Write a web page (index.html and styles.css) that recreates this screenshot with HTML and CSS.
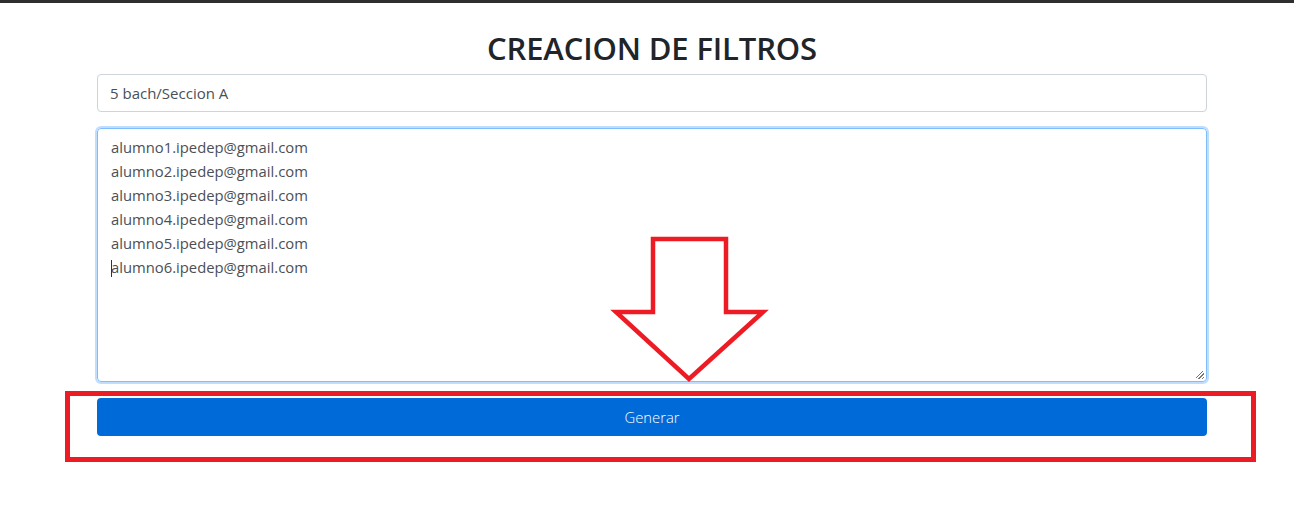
FILE: index.html
```html
<!DOCTYPE html>
<html lang="es">
<head>
<meta charset="utf-8">
<title>Creacion de filtros</title>
<link rel="stylesheet" href="styles.css">
</head>
<body>
<div class="topbar"></div>
<main class="container">
  <h2 class="title">CREACION DE FILTROS</h2>
  <form class="form">
    <input class="field" type="text" value="5 bach/Seccion A">
    <div class="area"><span class="caret"></span>alumno1.ipedep@gmail.com<br>alumno2.ipedep@gmail.com<br>alumno3.ipedep@gmail.com<br>alumno4.ipedep@gmail.com<br>alumno5.ipedep@gmail.com<br>alumno6.ipedep@gmail.com<span class="grip"></span></div>
    <button class="btn" type="button">Generar</button>
  </form>
</main>
<div class="mark-rect"></div>
<svg class="mark-arrow" width="1294" height="522" viewBox="0 0 1294 522">
  <polygon points="653,239 726,239 726,312 763,312 689,379 616,312 653,312" fill="none" stroke="#ed1c24" stroke-width="4.5" stroke-linejoin="miter"/>
</svg>
</body>
</html>
```
FILE: styles.css
```css
html, body {
  margin: 0;
  padding: 0;
  background: #fff;
}
body {
  font-family: "Open Sans", "Noto Sans", sans-serif;
  position: relative;
  width: 1294px;
  height: 522px;
  overflow: hidden;
}
.topbar {
  height: 3px;
  background: #2e2e2e;
}
.container {
  width: 1110px;
  margin-left: 97px;
}
.title {
  margin: 0;
  padding-top: 26px;
  height: 45px;
  text-align: center;
  font-size: 31px;
  font-weight: 600;
  line-height: 38px;
  color: #212529;
  letter-spacing: -0.15px;
}
.form {
  display: flex;
  flex-direction: column;
  gap: 16px;
}
.field {
  box-sizing: border-box;
  width: 1110px;
  height: 38px;
  margin: 0;
  padding: 6px 12px;
  border: 1px solid #ced4da;
  border-radius: 4px;
  font-family: inherit;
  font-size: 15px;
  color: #495057;
  outline: none;
}
.area {
  position: relative;
  box-sizing: border-box;
  width: 1110px;
  height: 254px;
  padding: 6px 13px;
  border: 1px solid #80bdff;
  border-radius: 4px;
  box-shadow: 0 0 0 2px rgba(0, 123, 255, 0.25);
  font-size: 14.8px;
  line-height: 24px;
  color: #495057;
}
.caret {
  position: absolute;
  left: 13px;
  top: 131px;
  width: 1px;
  height: 17px;
  background: #333;
}
.grip {
  position: absolute;
  right: 2px;
  bottom: 2px;
  width: 8px;
  height: 8px;
  background: linear-gradient(135deg, transparent 0 40%, #777 40% 48%, transparent 48% 62%, #777 62% 70%, transparent 70% 84%, #777 84% 92%, transparent 92%);
}
.btn {
  width: 1110px;
  height: 38px;
  margin-top: 0;
  border: none;
  border-radius: 4px;
  background: #006ad8;
  color: #fff;
  font-family: inherit;
  font-size: 14.8px;
  font-weight: 300;
}
.mark-rect {
  position: absolute;
  left: 65px;
  top: 391px;
  width: 1181px;
  height: 61px;
  border: 5px solid #ed1c24;
}
.mark-arrow {
  position: absolute;
  left: 0;
  top: 0;
  pointer-events: none;
}
```
